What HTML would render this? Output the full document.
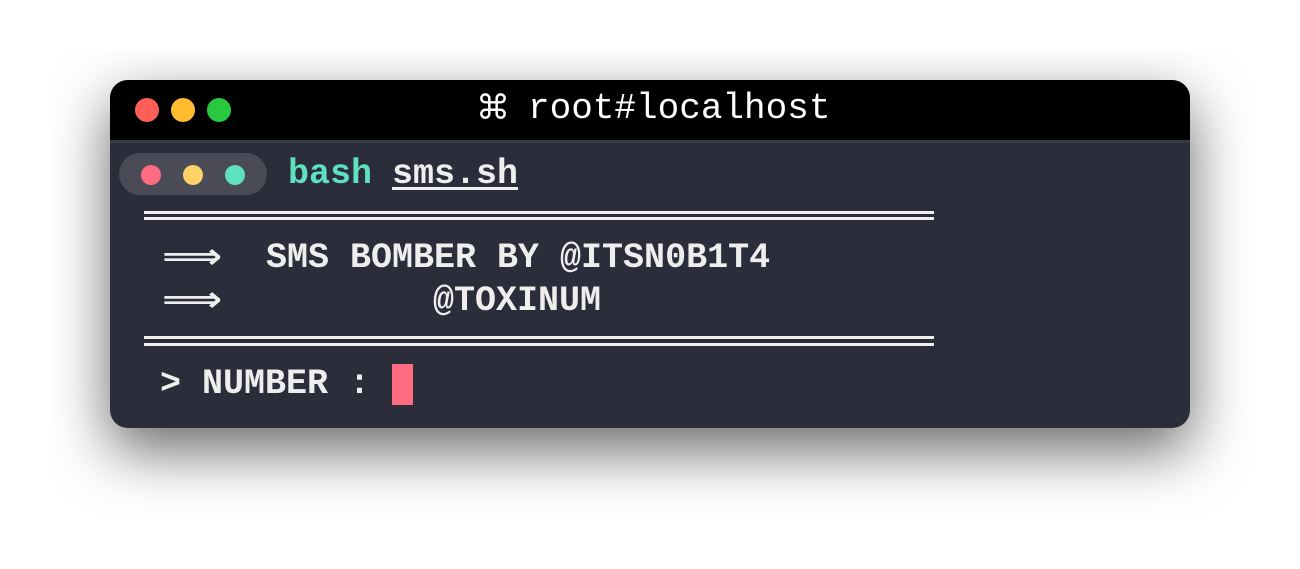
<!DOCTYPE html>
<html><head><style>
html,body{margin:0;padding:0;background:#fff;width:1300px;height:569px;overflow:hidden}
.clip{position:absolute;left:50px;top:50px;width:1200px;height:468px;overflow:hidden;background:#fff}
.win{position:absolute;left:60px;top:30px;width:1080px;height:348px;border-radius:18px;background:#2b2d3a;box-shadow:0 22px 60px rgba(0,0,0,0.6);overflow:hidden}
.tb{position:absolute;left:0;top:0;width:1080px;height:60px;background:#000;border-bottom:3px solid #383a47}
.d{position:absolute;border-radius:50%}
.t{position:absolute;font-family:"Liberation Mono","DejaVu Sans Mono",monospace;font-weight:bold;font-size:35px;line-height:40px;color:#eeeeee;white-space:pre}
.ln{position:absolute;left:34px;width:790px;height:3px;background:#eee}
.ar{position:absolute;font-family:'DejaVu Sans',sans-serif;font-size:35px;line-height:40px;color:#eee;font-weight:bold;transform-origin:0 50%;transform:scaleX(1.2)}
</style></head><body>
<div class="clip"><div class="win">
<div class="tb">
<div class="d" style="left:25px;top:18px;width:24px;height:24px;background:#ff5f57"></div>
<div class="d" style="left:61px;top:18px;width:24px;height:24px;background:#febc2e"></div>
<div class="d" style="left:97px;top:18px;width:24px;height:24px;background:#28c840"></div>
<div class="t" style="left:366px;top:8px;font-weight:normal;color:#fff;font-family:'DejaVu Sans','Liberation Mono',sans-serif;font-size:34px">⌘</div>
<div class="t" style="left:418px;top:9px;font-weight:normal;color:#fff;font-size:36px">root#localhost</div>
</div>
<div style="position:absolute;left:9px;top:73px;width:148px;height:42px;border-radius:21px;background:#4a4b57"></div>
<div class="d" style="left:31px;top:85px;width:20px;height:20px;background:#ff6b81"></div>
<div class="d" style="left:73px;top:85px;width:20px;height:20px;background:#ffd166"></div>
<div class="d" style="left:115px;top:85px;width:20px;height:20px;background:#5fe0c0"></div>
<div class="t" style="left:178px;top:74px;color:#5fe0c0">bash</div>
<div class="t" style="left:282px;top:74px;text-decoration:underline;text-underline-offset:4px">sms.sh</div>
<div class="ln" style="top:131px"></div><div class="ln" style="top:137px"></div>
<div class="ar" style="left:52px;top:157px">⟹</div>
<div class="t" style="left:156px;top:158px">SMS BOMBER BY @ITSN0B1T4</div>
<div class="ar" style="left:52px;top:200px">⟹</div>
<div class="t" style="left:323px;top:201px">@TOXINUM</div>
<div class="ln" style="top:256px"></div><div class="ln" style="top:263px"></div>
<div class="t" style="left:50px;top:284px">&gt; NUMBER :</div>
<div style="position:absolute;left:282px;top:284px;width:21px;height:41px;background:#ff6b81"></div>
</div></div>
</body></html>
